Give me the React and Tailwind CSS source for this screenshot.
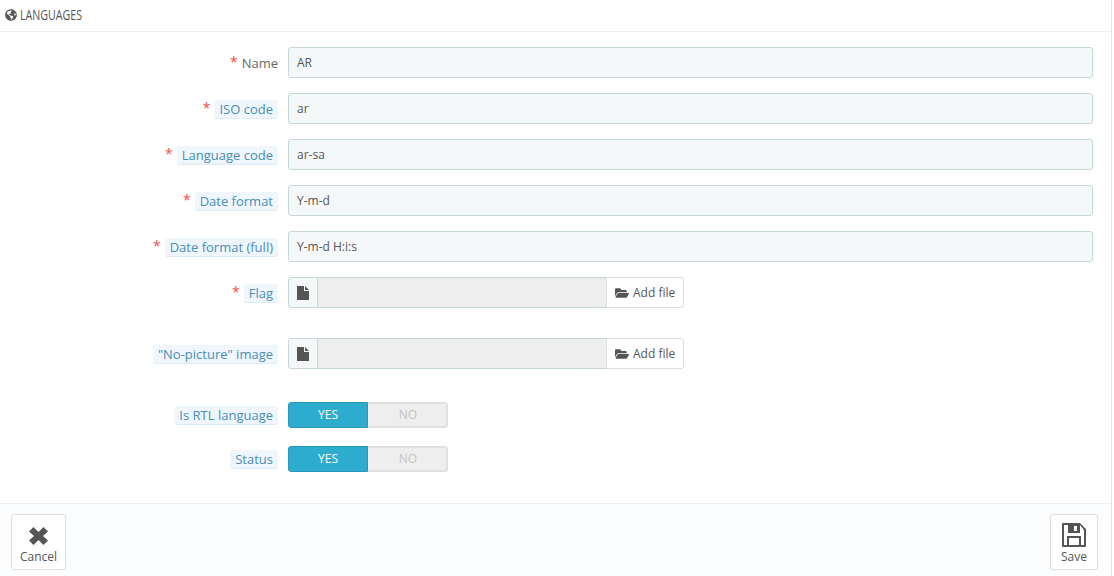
import { FaFolderOpen, FaGlobeAmericas } from "react-icons/fa";

const textFields = [
  { label: "Name", value: "AR", plain: true },
  { label: "ISO code", value: "ar" },
  { label: "Language code", value: "ar-sa" },
  { label: "Date format", value: "Y-m-d" },
  { label: "Date format (full)", value: "Y-m-d H:i:s" },
];

function Label({ required, plain, children }) {
  return (
    <div className="flex w-[278px] shrink-0 items-center justify-end">
      {required && <span className="mr-[4px] -mt-[2px] text-[14px] leading-none text-[#f0504a]">*</span>}
      {plain ? (
        <span className="pt-[2px] text-[#666]">{children}</span>
      ) : (
        <span className="mt-[1px] h-[19px] rounded-[3px] border-b border-[#dcebf5] bg-[#eff7fc] px-[5px] leading-[18px] text-[#4a8db5]">
          {children}
        </span>
      )}
    </div>
  );
}

function TextRow({ label, value, plain }) {
  return (
    <div className="mb-[15px] flex h-[31px] gap-[10px]">
      <Label required plain={plain}>{label}</Label>
      <div className="flex h-[31px] w-[805px] items-center rounded-[3px] border border-[#c7d6db] bg-[#f5f8f9] px-2 text-[12px] text-[#555]">
        {value}
      </div>
    </div>
  );
}

function FileIcon() {
  return (
    <svg viewBox="0 0 12 14" className="h-[14px] w-[12px]" fill="#555">
      <path d="M0 0h7v5h5v9H0z" />
      <path d="M8 0l4 4H8z" />
    </svg>
  );
}

function FileRow({ label, required, className }) {
  return (
    <div className={`flex h-[31px] gap-[10px] ${className}`}>
      <Label required={required}>{label}</Label>
      <div className="flex h-[31px] w-[396px]">
        <div className="flex w-[30px] items-center justify-center rounded-l-[3px] border border-[#c7d6db] bg-[#f5f8f9]">
          <FileIcon />
        </div>
        <div className="w-[288px] border-y border-[#c7d6db] bg-[#eee]" />
        <div className="flex flex-1 items-center gap-1 rounded-r-[3px] border border-[#dcdfe1] bg-white pl-2 text-[12px] text-[#555]">
          <FaFolderOpen className="h-[14px] w-[14px] text-[#555]" />
          Add file
        </div>
      </div>
    </div>
  );
}

function ToggleRow({ label, className }) {
  return (
    <div className={`flex h-[26px] gap-[10px] ${className}`}>
      <Label>{label}</Label>
      <div className="flex h-[26px] w-[160px] text-[12px]">
        <div className="flex w-[80px] items-center justify-center rounded-l-[3px] border border-[#2698ba] bg-[#2eacce] text-white">YES</div>
        <div className="flex w-[80px] items-center justify-center rounded-r-[3px] border-2 border-l-0 border-[#e0e0e0] bg-[#eee] pl-[2px] text-[#c4c4c4]">NO</div>
      </div>
    </div>
  );
}

export default function App() {
  return (
    <div className="h-[576px] w-[1114px] overflow-hidden bg-white font-['Open_Sans',sans-serif] text-[13px]">
      <div className="h-[576px] w-[1112px] border-r border-[#e6e6e6]">
        {/* Header */}
        <div className="flex h-[32px] items-center gap-[3px] border-b border-[#eee] pb-[2px] pl-[5px] text-[#555]">
          <FaGlobeAmericas className="h-[12px] w-[12px]" />
          <span className="inline-block origin-left scale-x-[.76] whitespace-nowrap text-[14px]">LANGUAGES</span>
        </div>

        {/* Form */}
        <div className="h-[471px] pt-[15px]">
          {textFields.map((f) => (
            <TextRow key={f.label} {...f} />
          ))}
          <FileRow label="Flag" required className="mb-[30px]" />
          <FileRow label={'"No-picture" image'} className="mb-[33px]" />
          <ToggleRow label="Is RTL language" className="mb-[18px]" />
          <ToggleRow label="Status" />
        </div>

        {/* Footer */}
        <div className="flex h-[73px] items-start justify-between border-t border-[#eee] bg-[#fcfdfe] pl-[11px] pr-[13px] pt-[10px]">
          <div className="flex h-[56px] w-[55px] flex-col items-center rounded-[3px] border border-[#ddd] bg-white pt-[12px] text-[12px] text-[#555]">
            <svg viewBox="0 0 19 18" className="h-[18px] w-[19px]" fill="#555">
              <path d="M4.5 0L9.5 5L14.5 0L19 4.5L14 9L19 13.5L14.5 18L9.5 13L4.5 18L0 13.5L5 9L0 4.5z" />
            </svg>
            <span className="mt-[3px]">Cancel</span>
          </div>
          <div className="flex h-[56px] w-[48px] flex-col items-center rounded-[3px] border border-[#ddd] bg-white pt-[8px] text-[12px] text-[#555]">
            <svg viewBox="0 0 24 24" className="h-[24px] w-[24px]" fill="#555">
              <path fillRule="evenodd" d="M1 0h17l6 6v17a1 1 0 0 1-1 1H1a1 1 0 0 1-1-1V1a1 1 0 0 1 1-1zM2 2v20h3V13h14v9h3V7l-4-5v8H6V2zM7 15v7h10v-7zM12 3v5h3V3z" />
            </svg>
            <span className="mt-[1px]">Save</span>
          </div>
        </div>
      </div>
    </div>
  );
}
